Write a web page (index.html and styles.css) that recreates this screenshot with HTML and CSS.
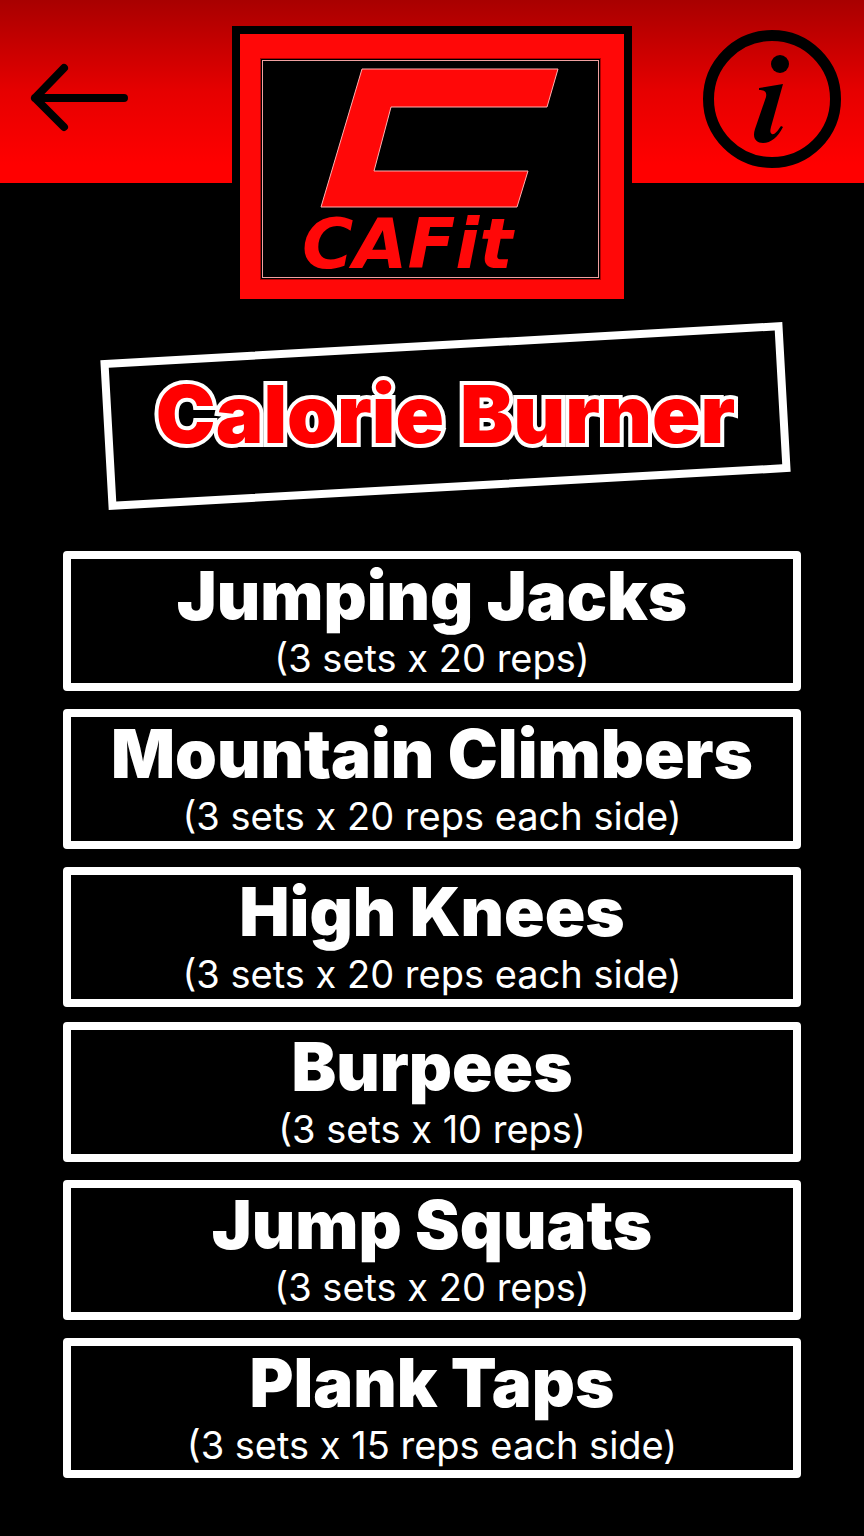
FILE: index.html
```html
<!DOCTYPE html>
<html lang="en">
<head>
<meta charset="utf-8">
<meta name="viewport" content="width=device-width, initial-scale=1">
<title>Calorie Burner</title>
<link rel="stylesheet" href="styles.css">
</head>
<body>
<header class="topbar">
  <button class="icon-button back" type="button" aria-label="Back">
    <svg width="100" height="70" viewBox="0 0 100 70" fill="none" stroke="#000" stroke-width="8" stroke-linecap="round" stroke-linejoin="round">
      <path d="M34 5 5 35l29 29M5 35h89"/>
    </svg>
  </button>
  <div class="logo">
    <svg class="logo-art" viewBox="0 0 384 265" role="img" aria-label="CAFit">
      <rect width="384" height="265" fill="#ff0808"/>
      <rect x="20.500" y="24.500" width="340" height="221" fill="#000" stroke="#a00"/>
      <rect x="22.500" y="26.500" width="336" height="217" fill="#000" stroke="#f0a0a0"/>
      <path d="M122 35H318L307 73H151L134 137H288L277 173H81Z" fill="#ff0808" stroke="#ffb0b0" stroke-width="1"/>
      <text class="wordmark" x="62" y="234">CAFit</text>
    </svg>
  </div>
  <button class="icon-button info" type="button" aria-label="Information">
    <svg width="138" height="138" viewBox="0 0 138 138">
      <circle cx="69" cy="69" r="63.500" fill="none" stroke="#000" stroke-width="11"/>
      <circle cx="77" cy="34" r="9"/>
      <path d="M80 54 56 58v2c6 0 8 2 7 7L52 99c-3 9 1 14 8 14 8 0 15-6 20-16l-2-1c-4 6-7 9-9 8-2-1-2-3-1-7Z"/>
    </svg>
  </button>
</header>
<main>
  <h1 class="title">Calorie Burner</h1>
  <ul class="exercises">
    <li class="card"><h2>Jumping Jacks</h2><p>(3 sets x 20 reps)</p></li>
    <li class="card"><h2>Mountain Climbers</h2><p>(3 sets x 20 reps each side)</p></li>
    <li class="card"><h2>High Knees</h2><p>(3 sets x 20 reps each side)</p></li>
    <li class="card"><h2>Burpees</h2><p>(3 sets x 10 reps)</p></li>
    <li class="card"><h2>Jump Squats</h2><p>(3 sets x 20 reps)</p></li>
    <li class="card"><h2>Plank Taps</h2><p>(3 sets x 15 reps each side)</p></li>
  </ul>
</main>
</body>
</html>
```
FILE: styles.css
```css
* {
  box-sizing: border-box;
}

body {
  margin: 0;
  min-height: 100vh;
  background: #000;
  color: #fff;
  font-family: Inter, "Liberation Sans", sans-serif;
}

h1, h2, p, ul {
  margin: 0;
  padding: 0;
}

.topbar {
  display: grid;
  grid-template-columns: 1fr 400px 1fr;
  align-items: start;
  padding-top: 26px;
  background: linear-gradient(#a80000, #e60000 50%, #f00 90%) top / 100% 183px no-repeat;
}

.icon-button {
  display: flex;
  padding: 0;
  border: 0;
  background: none;
  cursor: pointer;
}

.back {
  margin: 37px 0 0 30px;
}

.info {
  justify-self: end;
  margin: 4px 23px 0 0;
}

.logo {
  padding: 8px;
  background: #000;
}

.logo-art {
  display: block;
  width: 100%;
}

.wordmark {
  fill: #ff0808;
  font: italic bold 70px "DejaVu Sans", sans-serif;
}

/* The frame is tilted, the words stay level. */
.title {
  position: relative;
  height: 150px;
  margin: 34px 77px 0 104px;
  color: #f00;
  font-size: 80px;
  font-weight: 900;
  line-height: 146px;
  text-align: center;
  white-space: nowrap;
  -webkit-text-stroke: 8px #fff;
  paint-order: stroke fill;
}

.title::before {
  content: "";
  position: absolute;
  inset: 0;
  border: 8px solid #fff;
  transform: rotate(-3.2deg);
}

.exercises {
  display: flex;
  flex-direction: column;
  gap: 18px;
  margin: 60px 63px 58px;
  list-style: none;
}

.card {
  min-height: 140px;
  padding-top: 4px;
  border: 8px solid #fff;
  border-radius: 4px;
  text-align: center;
}

.card:nth-child(4) {
  margin-top: -3px;
}

.card h2 {
  font-size: 67px;
  font-weight: 900;
  line-height: 66px;
}

.card p {
  padding-top: 4px;
  font-size: 38px;
  line-height: 50px;
}
```
